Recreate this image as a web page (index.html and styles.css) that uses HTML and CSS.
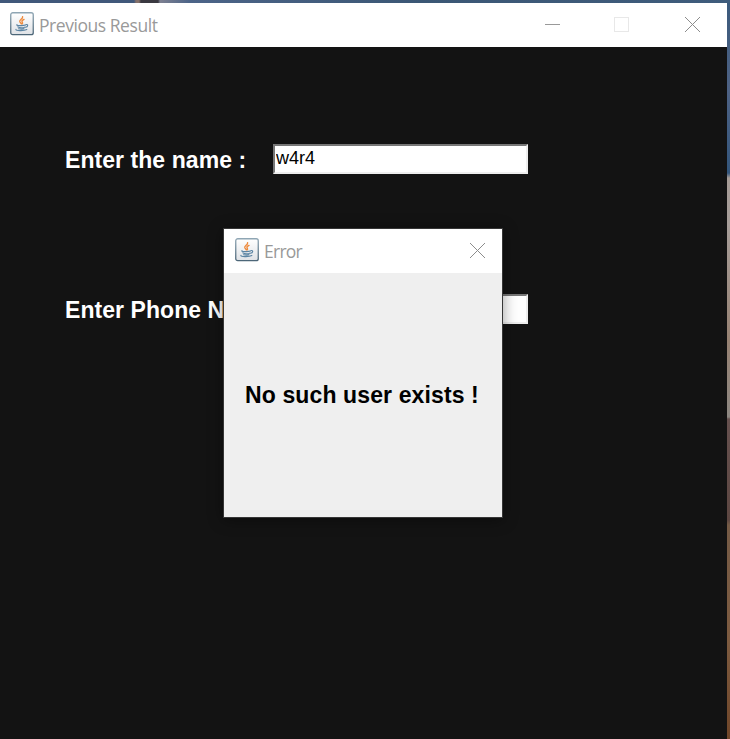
FILE: index.html
```html
<!DOCTYPE html>
<html lang="en">
<head>
<meta charset="utf-8">
<title>Previous Result</title>
<link rel="stylesheet" href="styles.css">
</head>
<body>
<svg width="0" height="0" class="defs" aria-hidden="true">
  <defs>
    <linearGradient id="tile" x1="0" y1="0" x2="0" y2="1"><stop offset="0" stop-color="#fff"/><stop offset="1" stop-color="#dfe2e6"/></linearGradient>
    <linearGradient id="edge" x1="0" y1="0" x2="0" y2="1"><stop offset="0" stop-color="#8fa6b4"/><stop offset="1" stop-color="#4c6678"/></linearGradient>
    <symbol id="java" viewBox="0 0 24 24">
      <rect x=".75" y=".75" width="22.5" height="21.9" rx="2" fill="url(#tile)" stroke="url(#edge)" stroke-width="1.3"/>
      <g fill="none" stroke-linecap="round">
        <path d="M12.6 4.6c.6 2.4-3.6 3-2.8 5.1.4.9 1.3 1.4 1.5 2.2M14 7.4c-2 1-2.6 1.6-1.7 2.8.5.7.3 1.2-.3 1.7" stroke="#ee8a3c" stroke-width="1.4"/>
        <path d="M7 12.6c-1.2.8 1.7 1.1 4.3 1 1.9 0 3.3-.2 4.2-.5M7.8 14.9c1.6 1.3 5.6 1.2 7 .2M16 12.5c2.4-.3 2.2 2.2-.5 2.8M6 17.4c-1.2 1.4 8 1.8 10.8.2M8.5 16.8c2 .5 4.3.4 5.6 0" stroke="#5b84a3" stroke-width="1.1"/>
      </g>
    </symbol>
  </defs>
</svg>
<div class="desktop">
  <main class="window">
    <header class="titlebar">
      <svg class="logo"><use href="#java"/></svg>
      <span class="title">Previous Result</span>
      <svg class="controls" width="157" height="17" fill="none" shape-rendering="crispEdges">
        <path d="M0 8.5h15" stroke="#999"/>
        <rect x="69.5" y="1.5" width="14" height="14" stroke="#e8e8e8"/>
        <path d="M140 1l15 15M155 1l-15 15" stroke="#8c8c8c" shape-rendering="auto"/>
      </svg>
    </header>
    <form class="form">
      <label class="row"><span class="label">Enter the name :</span><input class="field" type="text" value="w4r4"></label>
      <label class="row"><span class="label">Enter Phone Number</span><input class="field" type="text"></label>
    </form>
  </main>
  <section class="dialog" role="dialog">
    <header class="titlebar">
      <svg class="logo"><use href="#java"/></svg>
      <span class="title error">Error</span>
      <svg class="controls close" width="17" height="17" fill="none"><path d="M1 1l15 15M16 1l-15 15" stroke="#8c8c8c"/></svg>
    </header>
    <p class="message">No such user exists !</p>
  </section>
</div>
</body>
</html>
```
FILE: styles.css
```css
* { box-sizing: border-box; }
body { margin: 0; overflow: hidden; }
.defs { position: absolute; }
.desktop {
  position: relative;
  width: 730px;
  height: 739px;
  padding: 3px 3px 0 0;
  background:
    linear-gradient(90deg, #40587a 0 134px, #84706a 136px 139px, #3a3941 141px 158px, #7d8091 160px, #4c6488 190px, #3b5775 420px, #3f5c7c) 0 0 / 730px 3px no-repeat,
    linear-gradient(#3b5a7c, #4e6284 90px, #34567c 173px, #a59b96 178px, #a69d99 225px, #978273 340px, #8d8781 417px, #66514f 419px, #5d4742 520px, #755b46 525px, #7d5b40 640px, #704629 739px);
}
.window {
  width: 727px;
  height: 736px;
  background: #131313;
}
.titlebar {
  display: flex;
  align-items: center;
  height: 44px;
  padding-left: 10px;
  background: #fff;
}
.logo { width: 24px; height: 24px; margin-bottom: 2px; }
.title {
  margin-left: 5px;
  color: #999;
  font: 17.5px/24px "Open Sans", "Noto Sans", sans-serif;
  letter-spacing: -0.45px;
  white-space: nowrap;
}
.error { letter-spacing: -0.75px; }
.controls { margin: 0 25px 1px auto; }
.form {
  display: flex;
  flex-direction: column;
  gap: 120px;
  padding: 97px 0 0 65px;
}
.row { display: flex; height: 30px; align-items: center; }
.label {
  width: 208px;
  padding-top: 2px;
  color: #fff;
  font: bold 23px/30px "Liberation Sans", Arial, sans-serif;
  letter-spacing: 0.06px;
  white-space: nowrap;
}
.field {
  width: 255px;
  height: 30px;
  padding: 0 0 2px 1px;
  border: 2px solid;
  border-color: #777 #eee #eee #777;
  border-radius: 0;
  outline: 0;
  background: #fff;
  color: #000;
  font: 18px/24px "Liberation Sans", Arial, sans-serif;
}
.dialog {
  position: absolute;
  left: 223px;
  top: 228px;
  width: 280px;
  height: 290px;
  border: 1px solid #363636;
  background: #efefef;
  box-shadow: 0 2px 14px rgba(0, 0, 0, .4);
}
.dialog .titlebar { padding-left: 11px; }
.close { margin-right: 16px; }
.message {
  margin: 107px 0 0 21px;
  font: bold 23px/30px "Liberation Sans", Arial, sans-serif;
  letter-spacing: 0.12px;
  white-space: nowrap;
}
```
